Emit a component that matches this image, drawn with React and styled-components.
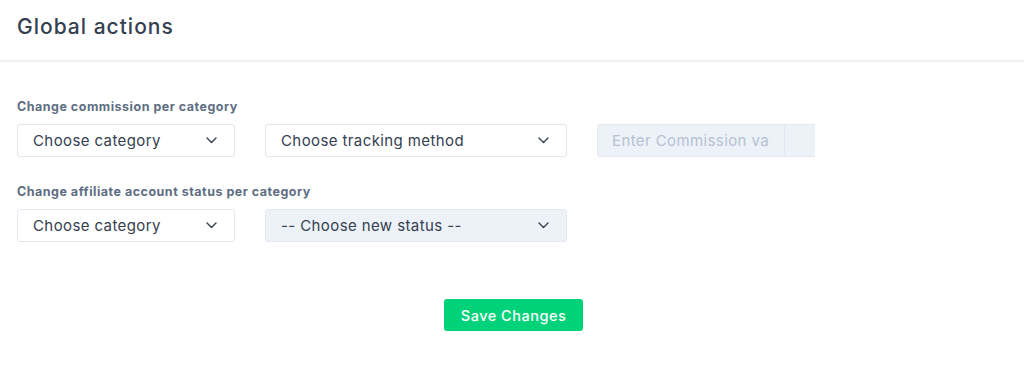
import React from "react";
import styled, { createGlobalStyle } from "styled-components";

const Global = createGlobalStyle`
  html, body { margin: 0; padding: 0; background: #fff; }
  body { font-family: "Inter", "Open Sans", sans-serif; -webkit-font-smoothing: antialiased; }
  * { box-sizing: border-box; }
`;

const Card = styled.div`
  width: 1024px;
  background: #fff;
`;

const Header = styled.div`
  height: 62px;
  padding: 0 17px 8px;
  display: flex;
  align-items: center;
  border-bottom: 2px solid #eef2f7;
`;

const Title = styled.h2`
  margin: 0;
  font-size: 21px;
  font-weight: 500;
  color: #344050;
  letter-spacing: 1px;
`;

const Body = styled.div`
  padding: 38px 17px 0;
  display: flex;
  flex-direction: column;
`;

const Group = styled.div`
  display: flex;
  flex-direction: column;
  margin-bottom: 28px;
`;

const Label = styled.div`
  font-size: 12.5px;
  font-weight: 700;
  color: #5e6e82;
  line-height: 14px;
  letter-spacing: 0.5px;
  margin-bottom: 10px;
`;

const Row = styled.div`
  display: flex;
  gap: 30px;
  align-items: center;
`;

const SelectBox = styled.div`
  width: ${(p) => p.$w}px;
  height: 33px;
  border: 1px solid #e3e8f0;
  border-radius: 3px;
  background: ${(p) => (p.$disabled ? "#edf2f9" : "#fff")};
  display: flex;
  align-items: center;
  justify-content: space-between;
  padding: 0 17px 0 15px;
  font-size: 15px;
  letter-spacing: 0.4px;
  color: #344050;
`;

const Chevron = () => (
  <svg width="11" height="7" viewBox="0 0 11 7" fill="none">
    <path d="M1 1l4.5 4.5L10 1" stroke="#344050" strokeWidth="1.4" strokeLinecap="round" strokeLinejoin="round" />
  </svg>
);

const InputGroup = styled.div`
  display: flex;
  width: 218px;
  height: 33px;
`;

const Input = styled.input`
  width: 188px;
  height: 33px;
  border: 1px solid #e3e8f0;
  border-radius: 3px 0 0 3px;
  background: #edf2f9;
  padding: 0 14px;
  font-family: inherit;
  font-size: 15px;
  letter-spacing: 0.4px;
  color: #344050;
  &::placeholder { color: #b6c1d2; }
`;

const Addon = styled.div`
  width: 30px;
  height: 33px;
  background: #edf2f9;
  border-top: 1px solid #e3e8f0;
  border-bottom: 1px solid #e3e8f0;
`;

const Footer = styled.div`
  display: flex;
  justify-content: center;
  padding: 29px 0 0 3px;
`;

const SaveButton = styled.button`
  width: 139px;
  height: 32px;
  border: none;
  border-radius: 3px;
  background: #00d27a;
  color: #fff;
  font-family: inherit;
  font-size: 14.5px;
  font-weight: 500;
  letter-spacing: 0.5px;
  cursor: pointer;
`;

const Select = ({ w, disabled, children }) => (
  <SelectBox $w={w} $disabled={disabled}>
    <span>{children}</span>
    <Chevron />
  </SelectBox>
);

export default function App() {
  return (
    <Card>
      <Global />
      <Header>
        <Title>Global actions</Title>
      </Header>
      <Body>
        <Group>
          <Label>Change commission per category</Label>
          <Row>
            <Select w={218}>Choose category</Select>
            <Select w={302}>Choose tracking method</Select>
            <InputGroup>
              <Input disabled placeholder="Enter Commission value" />
              <Addon />
            </InputGroup>
          </Row>
        </Group>
        <Group>
          <Label>Change affiliate account status per category</Label>
          <Row>
            <Select w={218}>Choose category</Select>
            <Select w={302} disabled>-- Choose new status --</Select>
          </Row>
        </Group>
        <Footer>
          <SaveButton>Save Changes</SaveButton>
        </Footer>
      </Body>
    </Card>
  );
}
